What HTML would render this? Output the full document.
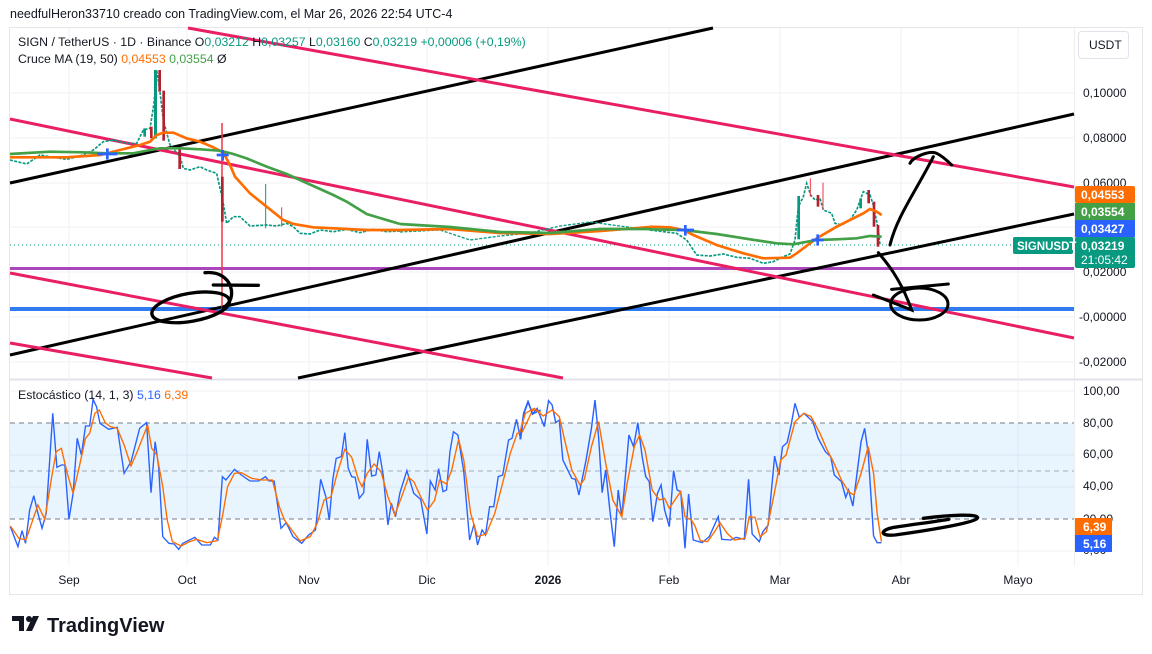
<!DOCTYPE html>
<html><head><meta charset="utf-8"><style>
body{margin:0;width:1152px;height:654px;background:#fff;overflow:hidden;font-family:"Liberation Sans",Arial,sans-serif;position:relative}
.t{position:absolute;white-space:nowrap}
</style></head><body>
<div class="t" style="left:10px;top:7px;font-size:12.5px;color:#131722">needfulHeron33710 creado con TradingView.com, el Mar 26, 2026 22:54 UTC-4</div>
<svg width="1152" height="654" style="position:absolute;left:0;top:0" font-family="Liberation Sans, Arial, sans-serif">
<rect x="9.5" y="27.5" width="1133" height="567" fill="none" stroke="#e6e6e9"/>
<line x1="1074.5" y1="28" x2="1074.5" y2="566" stroke="#eee"/>
<line x1="10" y1="379.5" x2="1142" y2="379.5" stroke="#e0e3eb" stroke-width="2"/>
<g stroke="#f0f1f4">
<line x1="10" y1="93" x2="1074" y2="93"/><line x1="10" y1="138" x2="1074" y2="138"/><line x1="10" y1="183" x2="1074" y2="183"/><line x1="10" y1="227" x2="1074" y2="227"/><line x1="10" y1="272" x2="1074" y2="272"/><line x1="10" y1="317" x2="1074" y2="317"/><line x1="10" y1="362" x2="1074" y2="362"/>
<line x1="10" y1="391" x2="1074" y2="391"/><line x1="10" y1="455" x2="1074" y2="455"/><line x1="10" y1="487" x2="1074" y2="487"/><line x1="10" y1="551" x2="1074" y2="551"/>
<line x1="69" y1="28" x2="69" y2="566"/><line x1="187" y1="28" x2="187" y2="566"/><line x1="309" y1="28" x2="309" y2="566"/><line x1="427" y1="28" x2="427" y2="566"/><line x1="548" y1="28" x2="548" y2="566"/><line x1="669" y1="28" x2="669" y2="566"/><line x1="780" y1="28" x2="780" y2="566"/><line x1="901" y1="28" x2="901" y2="566"/><line x1="1018" y1="28" x2="1018" y2="566"/>
</g>
<rect x="10" y="423" width="1064" height="96" fill="#2196f3" fill-opacity="0.1"/>
<g stroke="#787b86" stroke-dasharray="5,4" stroke-width="1"><line x1="10" y1="423" x2="1074" y2="423"/><line x1="10" y1="471" x2="1074" y2="471" stroke-opacity="0.6"/><line x1="10" y1="519" x2="1074" y2="519"/></g>
<line x1="10" y1="268.5" x2="1074" y2="268.5" stroke="#ab47bc" stroke-width="3"/>
<line x1="10" y1="309" x2="1074" y2="309" stroke="#2f7bf0" stroke-width="4"/>
<line x1="10" y1="245" x2="1074" y2="245" stroke="#089981" stroke-dasharray="1,3"/>
<g stroke="#000" stroke-width="3"><line x1="10" y1="183" x2="713" y2="28"/><line x1="10" y1="355" x2="1074" y2="114"/><line x1="298" y1="378" x2="1074" y2="214"/></g>
<g stroke="#e91e63" stroke-width="3"><line x1="188" y1="28" x2="1074" y2="187"/><line x1="10" y1="119" x2="1074" y2="338"/><line x1="10" y1="273" x2="563" y2="378"/><line x1="10" y1="343" x2="212" y2="378"/></g>
<line x1="222" y1="123" x2="222" y2="310" stroke="#f23645" stroke-width="1.5"/>
<g transform="translate(0,70) scale(0.33333)">
<polyline fill="none" stroke="#089981" stroke-width="5" stroke-dasharray="9,4" points="30,270 80,282 120,255 160,262 200,268 240,258 280,240 310,215 340,210 380,220 410,220 430,180 450,175 462,100 470,0 478,50 490,150 510,225 540,260 550,295 570,300 600,290 620,300 650,310 668,390 680,460 700,440 720,440 750,468 800,465 830,468 860,460 880,470 900,490 930,492 960,480 1000,485 1040,478 1080,488 1120,478 1160,485 1200,483"/>
<rect x="462" y="0" width="9" height="205" fill="#089981"/><rect x="475" y="0" width="8" height="65" fill="#b2222f"/><rect x="487" y="62" width="8" height="150" fill="#b2222f"/>
<rect x="663" y="320" width="8" height="135" fill="#b2222f"/><rect x="535" y="232" width="8" height="65" fill="#b2222f"/>
<rect x="450" y="170" width="8" height="35" fill="#b2222f"/><rect x="430" y="175" width="8" height="25" fill="#089981"/>
<line x1="797" y1="342" x2="797" y2="475" stroke="#089981" stroke-width="3"/><line x1="845" y1="412" x2="845" y2="470" stroke="#f23645" stroke-width="3"/>
<polyline fill="none" stroke="#ff6d00" stroke-width="8" points="30,262 100,262 200,262 300,255 360,240 420,225 450,215 470,195 490,188 520,188 560,205 600,215 640,232 670,248 690,285 705,320 750,370 800,410 850,450 880,462 940,472 1000,475 1100,480 1200,480"/>
<polyline fill="none" stroke="#43a047" stroke-width="8" points="30,252 150,245 250,247 320,250 400,250 450,240 480,235 540,235 600,238 660,242 700,252 740,265 800,290 860,312 900,330 1000,375 1040,395 1100,432 1200,462"/>
<path d="M615,608 C700,600 715,690 670,712 M640,645 L775,646" fill="none" stroke="#000" stroke-width="10" stroke-linecap="round"/>
<ellipse cx="572" cy="712" rx="118" ry="42" transform="rotate(-10 572 712)" fill="none" stroke="#000" stroke-width="10"/>
<path d="M292,252 h60 M322,235 v34 M650,255 h36 M668,240 v32" stroke="#2962ff" stroke-width="8"/>
</g>
<polyline fill="none" stroke="#089981" stroke-width="1.3" stroke-dasharray="3,1.5" points="400,232 440,230 470,240 500,236 530,233 560,226 590,222 620,226 650,230"/>
<polyline fill="none" stroke="#ff6d00" stroke-width="2.7" points="400,230 450,229 500,233 550,234 600,231 650,227"/>
<polyline fill="none" stroke="#43a047" stroke-width="2.7" points="400,224 450,227 500,232 550,233 600,229 650,229"/>
<g transform="translate(650,130) scale(0.33333)">
<polyline fill="none" stroke="#089981" stroke-width="5" stroke-dasharray="9,4" points="0,300 40,305 80,310 110,330 140,375 180,378 220,372 260,382 300,385 340,400 370,395 400,380 420,372 435,330 445,230 460,200 470,160 482,195 495,210 510,205 520,240 545,250 555,280 575,285 600,270 620,240 640,185 660,195 670,225 685,300 690,345"/>
<rect x="442" y="198" width="8" height="130" fill="#089981"/><rect x="500" y="195" width="8" height="35" fill="#b2222f"/><rect x="668" y="215" width="8" height="75" fill="#b2222f"/><rect x="680" y="285" width="8" height="65" fill="#b2222f"/><rect x="652" y="180" width="8" height="40" fill="#b2222f"/><rect x="628" y="205" width="8" height="30" fill="#089981"/>
<line x1="481" y1="145" x2="481" y2="200" stroke="#f23645" stroke-width="3"/><line x1="519" y1="158" x2="519" y2="240" stroke="#f23645" stroke-width="3"/>
<polyline fill="none" stroke="#ff6d00" stroke-width="8" points="0,290 60,292 100,300 130,315 200,345 280,370 340,385 420,383 440,370 500,325 560,290 600,270 640,250 660,237 680,245 695,255"/>
<polyline fill="none" stroke="#43a047" stroke-width="8" points="0,298 100,300 200,312 300,328 380,340 430,343 500,330 560,328 620,325 660,318 695,320"/>
<path d="M80,300 h52 M106,285 v32 M485,330 h36 M503,313 v34" stroke="#2962ff" stroke-width="8"/>
<path d="M720,345 C740,260 800,180 850,80 M780,100 C790,80 840,60 860,70 C880,80 895,95 905,105" fill="none" stroke="#000" stroke-width="9" stroke-linecap="round"/>
<path d="M685,368 C730,420 760,470 785,540 L670,495 M725,478 L895,462" fill="none" stroke="#000" stroke-width="9" stroke-linecap="round"/>
<ellipse cx="808" cy="522" rx="86" ry="48" fill="none" stroke="#000" stroke-width="9"/>
</g>
<g transform="translate(0,380) scale(0.3448,0.33333)" fill="none">
<polyline stroke="#2962ff" stroke-width="4" points="30,440 52,500 64,452 74,490 86,390 98,347 110,400 122,445 134,400 153,100 165,262 178,255 188,255 200,418 212,340 224,175 236,225 248,138 260,138 270,58 280,80 290,130 315,148 340,142 360,280 380,245 405,145 425,128 438,338 450,185 460,260 472,470 490,490 505,492 518,508 530,490 565,472 585,495 610,495 622,472 632,480 645,290 655,300 680,268 700,285 725,303 750,303 770,290 780,303 795,303 815,445 830,428 850,470 875,490 895,465 915,450 930,298 945,350 955,420 965,300 975,235 990,230 1000,158 1010,265 1020,290 1030,292 1042,355 1055,338 1065,178 1078,288 1090,285 1100,215 1112,290 1125,435 1135,370 1147,410 1160,338 1180,272 1200,340 1220,358 1238,462 1248,303 1262,330 1272,266 1285,335 1295,330 1305,215 1315,155 1328,165 1345,275 1362,480 1375,432 1385,495 1398,450 1408,465 1420,380 1432,380 1445,290 1458,285 1475,180 1485,175 1498,118 1510,178 1520,100 1532,65 1545,102 1568,90"/>
<polyline stroke="#ff6d00" stroke-width="4" points="30,438 55,475 75,480 110,375 130,418 150,290 163,215 178,205 195,280 212,340 230,260 248,175 260,160 275,100 288,90 305,128 320,140 340,145 360,195 380,258 400,210 428,135 440,205 455,225 472,320 485,420 500,485 525,498 550,485 570,478 600,488 630,482 645,410 660,320 680,280 700,278 730,295 760,300 790,300 810,380 825,420 845,448 870,483 900,470 920,430 940,360 960,350 978,280 1000,208 1020,232 1040,300 1050,320 1065,280 1085,252 1105,275 1125,350 1145,405 1165,350 1185,292 1200,305 1220,350 1240,390 1260,362 1275,300 1295,312 1310,270 1330,178 1345,240 1365,400 1385,470 1410,462 1435,400 1450,340 1480,220 1500,160 1515,155 1545,90 1568,95"/>
</g>
<g transform="translate(520,380) scale(0.35714,0.33333)" fill="none">
<polyline stroke="#2962ff" stroke-width="4" points="0,178 10,100 22,65 35,102 48,85 68,140 80,62 90,75 100,128 110,120 120,240 145,295 155,298 165,345 185,240 200,145 210,60 220,170 230,338 240,270 252,395 264,500 275,330 285,410 295,290 305,165 318,200 330,128 342,230 352,290 362,305 372,425 385,340 395,315 405,390 418,440 430,272 440,330 450,335 462,505 472,342 485,480 510,488 530,470 555,410 565,478 590,480 605,472 628,478 640,298 650,462 670,485 680,455 695,435 713,228 725,285 735,200 748,188 760,130 770,70 782,112 795,100 820,125 835,175 855,215 870,230 880,285 900,305 912,352 920,330 932,378 955,185 965,145 975,220 990,468 1000,488 1012,488"/>
<polyline stroke="#ff6d00" stroke-width="4" points="0,155 15,100 40,85 65,108 90,90 110,110 125,180 145,270 168,315 180,298 200,200 220,125 240,250 260,360 285,410 300,310 320,200 335,165 350,210 370,330 390,360 405,355 418,385 440,350 450,335 462,410 480,420 490,438 505,482 525,485 545,455 560,428 580,460 600,480 630,475 642,410 658,412 672,470 690,455 712,340 730,240 745,225 770,125 795,100 815,110 840,160 860,210 875,240 900,300 920,335 935,345 955,280 975,200 990,280 1000,400 1012,485"/>
<path d="M1130,415 C1200,405 1290,400 1280,415 C1270,430 1120,455 1050,465 C1000,470 1010,445 1060,440 C1110,432 1160,425 1200,418" stroke="#000" stroke-width="10" stroke-linecap="round"/>
</g>
<g font-size="12" fill="#131722" text-anchor="start">
<text x="1083" y="97">0,10000</text><text x="1083" y="142">0,08000</text><text x="1083" y="187">0,06000</text><text x="1083" y="276">0,02000</text><text x="1079" y="321">-0,00000</text><text x="1079" y="366">-0,02000</text>
<text x="1083" y="395">100,00</text><text x="1083" y="427">80,00</text><text x="1083" y="458">60,00</text><text x="1083" y="490">40,00</text><text x="1083" y="523">20,00</text><text x="1083" y="554">0,00</text>
</g>
<rect x="1078.5" y="31.5" width="50" height="27" rx="3" fill="#fff" stroke="#e0e3eb"/>
<text x="1089" y="49" font-size="12" fill="#131722">USDT</text>
<rect x="1075" y="186" width="60" height="17" rx="2" fill="#ff6d00"/><text x="1081" y="199" font-size="12" font-weight="bold" fill="#fff">0,04553</text>
<rect x="1075" y="203" width="60" height="17" fill="#43a047"/><text x="1081" y="216" font-size="12" font-weight="bold" fill="#fff">0,03554</text>
<rect x="1075" y="220" width="60" height="17" fill="#2962ff"/><text x="1081" y="233" font-size="12" font-weight="bold" fill="#fff">0,03427</text>
<rect x="1075" y="237" width="60" height="31" rx="2" fill="#089981"/><text x="1081" y="250" font-size="12" font-weight="bold" fill="#fff">0,03219</text><text x="1081" y="264" font-size="12" fill="#fff">21:05:42</text>
<rect x="1013" y="237" width="60" height="17" rx="2" fill="#089981"/><text x="1017" y="250" font-size="11.5" font-weight="bold" fill="#fff">SIGNUSDT</text>
<rect x="1075" y="518" width="37" height="17" fill="#ff6d00"/><text x="1083" y="531" font-size="12" font-weight="bold" fill="#fff">6,39</text>
<rect x="1075" y="535" width="37" height="17" fill="#2962ff"/><text x="1083" y="548" font-size="12" font-weight="bold" fill="#fff">5,16</text>
<g font-size="12" fill="#131722" text-anchor="middle">
<text x="69" y="584">Sep</text><text x="187" y="584">Oct</text><text x="309" y="584">Nov</text><text x="427" y="584">Dic</text><text x="548" y="584" font-weight="bold">2026</text><text x="669" y="584">Feb</text><text x="780" y="584">Mar</text><text x="901" y="584">Abr</text><text x="1018" y="584">Mayo</text>
</g>
<g font-size="12.3">
<text x="18" y="46" fill="#131722">SIGN / TetherUS · 1D · Binance <tspan fill="#131722">O</tspan><tspan fill="#089981">0,03212</tspan> <tspan fill="#131722">H</tspan><tspan fill="#089981">0,03257</tspan> <tspan fill="#131722">L</tspan><tspan fill="#089981">0,03160</tspan> <tspan fill="#131722">C</tspan><tspan fill="#089981">0,03219 +0,00006 (+0,19%)</tspan></text>
<text x="18" y="63" fill="#131722">Cruce MA (19, 50) <tspan fill="#ff6d00">0,04553</tspan> <tspan fill="#43a047">0,03554</tspan> Ø</text>
<text x="18" y="399" fill="#131722">Estocástico (14, 1, 3) <tspan fill="#2962ff">5,16</tspan> <tspan fill="#ff6d00">6,39</tspan></text>
</g>
<g fill="#131722"><path d="M12,616 h12 v15 h-5 v-10 h-7z"/><circle cx="29" cy="619" r="3"/><path d="M33,616 h6 l-7,15 h-6z"/></g>
<text x="47" y="632" font-size="20" font-weight="bold" fill="#131722">TradingView</text>
</svg>
</body></html>
